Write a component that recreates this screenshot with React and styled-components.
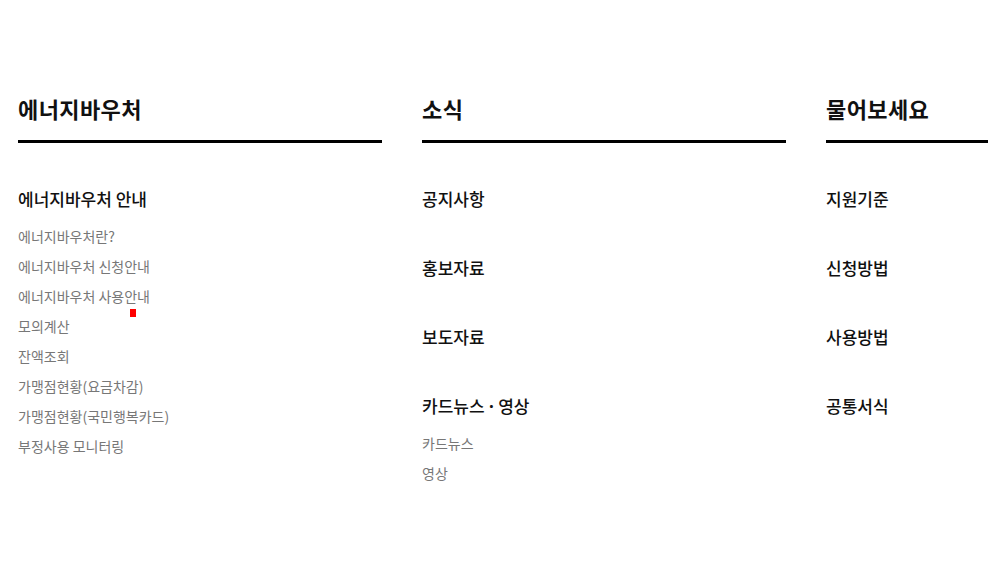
import React from "react";
import styled, { createGlobalStyle } from "styled-components";

const Global = createGlobalStyle`
  html, body { margin: 0; padding: 0; background: #fff; }
  body {
    font-family: "Noto Sans CJK KR", "Noto Sans", sans-serif;
    overflow: hidden;
    width: 988px;
    height: 582px;
  }
  * { box-sizing: border-box; }
`;

const Page = styled.div`
  position: relative;
  width: 988px;
  height: 582px;
  overflow: hidden;
`;

const Columns = styled.div`
  display: flex;
  gap: 40px;
  padding: 92px 0 0 18px;
`;

const Column = styled.section`
  flex: 0 0 364px;
  width: 364px;
`;

const Title = styled.h2`
  margin: 0;
  font-size: 22px;
  font-weight: 700;
  line-height: 32px;
  letter-spacing: 0.4px;
  color: #111;
  padding-bottom: 16px;
  border-bottom: 3px solid #000;
`;

const Groups = styled.div`
  display: flex;
  flex-direction: column;
  gap: 45px;
  margin-top: 44px;
`;

const Group = styled.div`
  display: flex;
  flex-direction: column;
`;

const GroupTitle = styled.h3`
  margin: 0;
  height: 24px;
  font-size: 17px;
  font-weight: 500;
  line-height: 24px;
  letter-spacing: 0;
  color: #111;
  white-space: nowrap;
`;

const Sep = styled.span`
  font-family: "Noto Sans", "DejaVu Sans", sans-serif;
  font-weight: 700;
  line-height: 1;
`;

const Items = styled.ul`
  list-style: none;
  margin: 10px 0 0;
  padding: 0;
`;

const Item = styled.li`
  font-size: 14px;
  line-height: 30px;
  letter-spacing: 0;
  color: #777;
`;

const Marker = styled.span`
  position: absolute;
  left: 130px;
  top: 309px;
  width: 6px;
  height: 8px;
  background: #ff0000;
`;

const data = [
  {
    title: "에너지바우처",
    groups: [
      {
        title: ["에너지바우처 안내"],
        items: [
          "에너지바우처란?",
          "에너지바우처 신청안내",
          "에너지바우처 사용안내",
          "모의계산",
          "잔액조회",
          "가맹점현황(요금차감)",
          "가맹점현황(국민행복카드)",
          "부정사용 모니터링",
        ],
      },
    ],
  },
  {
    title: "소식",
    groups: [
      { title: ["공지사항"] },
      { title: ["홍보자료"] },
      { title: ["보도자료"] },
      { title: ["카드뉴스", "영상"], items: ["카드뉴스", "영상"] },
    ],
  },
  {
    title: "물어보세요",
    groups: [
      { title: ["지원기준"] },
      { title: ["신청방법"] },
      { title: ["사용방법"] },
      { title: ["공통서식"] },
    ],
  },
];

export default function App() {
  return (
    <Page>
      <Global />
      <Columns>
        {data.map((col) => (
          <Column key={col.title}>
            <Title>{col.title}</Title>
            <Groups>
              {col.groups.map((g) => (
                <Group key={g.title.join("")}>
                  <GroupTitle>
                    {g.title.map((part, i) => (
                      <React.Fragment key={part}>
                        {i > 0 && <Sep> · </Sep>}
                        {part}
                      </React.Fragment>
                    ))}
                  </GroupTitle>
                  {g.items && (
                    <Items>
                      {g.items.map((it) => (
                        <Item key={it}>{it}</Item>
                      ))}
                    </Items>
                  )}
                </Group>
              ))}
            </Groups>
          </Column>
        ))}
      </Columns>
      <Marker />
    </Page>
  );
}
